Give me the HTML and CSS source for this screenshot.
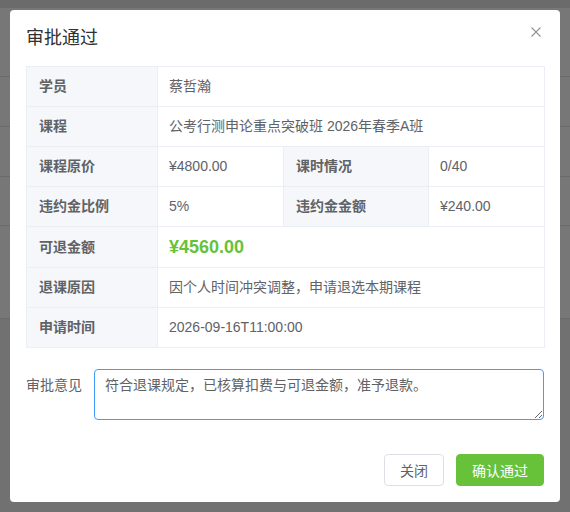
FILE: index.html
```html
<!DOCTYPE html>
<html lang="zh-CN">
<head>
<meta charset="utf-8">
<title>审批通过</title>
<link rel="stylesheet" href="styles.css">
</head>
<body>
<div class="backdrop">
  <div class="bd-top"></div>
  <div class="bd-row bd-h69"></div>
  <div class="bd-row bd-h50"></div>
  <div class="bd-row bd-h50"></div>
  <div class="bd-row bd-h48"></div>
  <div class="bd-row bd-h93"></div>
  <div class="bd-rest"></div>
</div>

<div class="dialog">
  <div class="dialog-header">
    <span class="dialog-title">审批通过</span>
    <button class="dialog-close" aria-label="关闭">
      <svg width="10" height="10" viewBox="0 0 10 10"><path d="M0.5 0.5 L9.5 9.5 M9.5 0.5 L0.5 9.5" stroke="#909399" stroke-width="1.1" fill="none"/></svg>
    </button>
  </div>

  <table class="desc">
    <colgroup>
      <col class="c1"><col class="c2"><col class="c3"><col class="c4">
    </colgroup>
    <tr>
      <th>学员</th>
      <td colspan="3">蔡哲瀚</td>
    </tr>
    <tr>
      <th>课程</th>
      <td colspan="3">公考行测申论重点突破班 2026年春季A班</td>
    </tr>
    <tr>
      <th>课程原价</th>
      <td>¥4800.00</td>
      <th>课时情况</th>
      <td>0/40</td>
    </tr>
    <tr>
      <th>违约金比例</th>
      <td>5%</td>
      <th>违约金金额</th>
      <td>¥240.00</td>
    </tr>
    <tr class="amount-row">
      <th>可退金额</th>
      <td colspan="3"><span class="amount">¥4560.00</span></td>
    </tr>
    <tr>
      <th>退课原因</th>
      <td colspan="3">因个人时间冲突调整，申请退选本期课程</td>
    </tr>
    <tr>
      <th>申请时间</th>
      <td colspan="3">2026-09-16T11:00:00</td>
    </tr>
  </table>

  <div class="form-row">
    <label class="form-label" for="opinion">审批意见</label>
    <textarea id="opinion" class="form-textarea" rows="2" spellcheck="false">符合退课规定，已核算扣费与可退金额，准予退款。</textarea>
  </div>

  <div class="dialog-footer">
    <button class="btn btn-default">关闭</button>
    <button class="btn btn-success">确认通过</button>
  </div>
</div>
</body>
</html>
```

FILE: styles.css
```css
* { box-sizing: border-box; }

html, body {
  margin: 0;
  padding: 0;
}

body {
  width: 570px;
  height: 512px;
  overflow: hidden;
  background: #717171;
  font-family: "Liberation Sans", "Noto Sans CJK SC", sans-serif;
  position: relative;
}

/* dimmed page behind the dialog */
.backdrop {
  display: flex;
  flex-direction: column;
  height: 512px;
}
.bd-top { height: 8px; background: #6b6b6b; }
.bd-row {
  background: #777777;
  border-bottom: 1px solid #6a6a6a;
}
.bd-h69 { height: 69px; }
.bd-h50 { height: 50px; }
.bd-h48 { height: 49px; }
.bd-h93 { height: 93px; }
.bd-rest { flex: 1; background: #717171; }

/* dialog */
.dialog {
  position: absolute;
  left: 10px;
  top: 10px;
  width: 550px;
  height: 492px;
  background: #ffffff;
  border-radius: 4px;
  padding: 16px;
  display: flex;
  flex-direction: column;
}

.dialog-header {
  height: 24px;
  margin-bottom: 16px;
  display: flex;
  align-items: center;
}

.dialog-title {
  font-size: 18px;
  line-height: 24px;
  color: #303133;
}

.dialog-close {
  position: absolute;
  top: 17px;
  right: 19px;
  width: 10px;
  height: 10px;
  padding: 0;
  border: 0;
  background: transparent;
  display: flex;
}

/* descriptions table */
.desc {
  width: 518px;
  border-collapse: collapse;
  table-layout: fixed;
  font-size: 14px;
  color: #606266;
}
.c1 { width: 131px; }
.c2 { width: 126px; }
.c3 { width: 145px; }
.c4 { width: 116px; }

.desc th,
.desc td {
  border: 1px solid #ebeef5;
  padding: 9px 12px 9px 11px;
  line-height: 21px;
  text-align: left;
  vertical-align: middle;
  white-space: nowrap;
}

.desc th {
  background: #f5f7fa;
  font-weight: bold;
  color: #606266;
  padding-left: 12px;
}

.desc td {
  font-weight: normal;
}

.amount {
  display: inline-block;
  vertical-align: top;
  color: #67c23a;
  font-size: 18px;
  line-height: 22px;
  font-weight: bold;
}

/* form */
.form-row {
  display: flex;
  align-items: flex-start;
  margin-top: 21px;
}

.form-label {
  width: 68px;
  padding-right: 12px;
  font-size: 14px;
  line-height: 21px;
  padding-top: 6px;
  color: #606266;
  flex-shrink: 0;
}

.form-textarea {
  width: 450px;
  height: 51px;
  border: 1px solid #409eff;
  border-radius: 4px;
  padding: 5px 10px;
  font-family: "Liberation Sans", "Noto Sans CJK SC", sans-serif;
  font-size: 14px;
  line-height: 21px;
  color: #606266;
  outline: none;
  resize: vertical;
}

/* footer */
.dialog-footer {
  margin-top: auto;
  display: flex;
  justify-content: flex-end;
  gap: 12px;
}

.btn {
  height: 32px;
  border-radius: 4px;
  font-family: "Liberation Sans", "Noto Sans CJK SC", sans-serif;
  font-size: 14px;
  padding: 0 15px;
  cursor: pointer;
}

.btn-default {
  width: 60px;
  background: #ffffff;
  border: 1px solid #dcdfe6;
  color: #606266;
}

.btn-success {
  width: 88px;
  background: #67c23a;
  border: 1px solid #67c23a;
  color: #ffffff;
}
```
